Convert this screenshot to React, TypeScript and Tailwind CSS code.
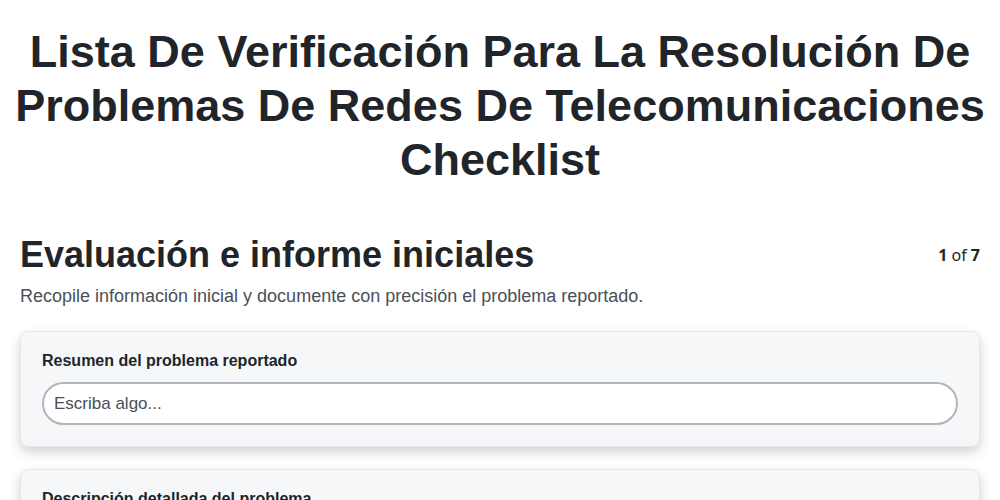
export default function App() {
  return (
    <main className="min-h-screen bg-white pt-[25px] text-[#212529] font-['Liberation_Sans',Arial,sans-serif]">
      <h1 className="px-[8px] text-center text-[45px] font-bold leading-[54px]">
        Lista De Verificación Para La Resolución De Problemas De Redes De Telecomunicaciones Checklist
      </h1>

      <section className="mt-[46px] px-5">
        <div className="flex items-center justify-between">
          <h2 className="text-[36px] font-bold leading-[43px]">Evaluación e informe iniciales</h2>
          <span className="font-['Noto_Sans',sans-serif] text-[16px] text-[#212529]">
            <b>1</b> of <b>7</b>
          </span>
        </div>
        <p className="mt-[7px] text-[18px] leading-[27px] text-[#495057]">
          Recopile información inicial y documente con precisión el problema reportado.
        </p>

        <div className="mt-[21px] flex flex-col gap-[22px]">
          <div className="rounded-lg border border-[#e5e7eb] bg-[#f6f7f9] px-[21px] pb-[21px] pt-[17px] shadow-[0_5px_12px_rgba(0,0,0,0.18)]">
            <label className="block text-[16px] font-bold leading-[24px]">Resumen del problema reportado</label>
            <input
              type="text"
              placeholder="Escriba algo..."
              className="mt-[9px] h-[43px] w-full rounded-full border-2 border-[#b1b6bc] bg-white px-[10px] text-[17px] placeholder:text-[#495057] outline-none"
            />
          </div>
          <div className="rounded-lg border border-[#e5e7eb] bg-[#f6f7f9] px-[21px] pb-[21px] pt-[17px] shadow-[0_5px_12px_rgba(0,0,0,0.18)]">
            <label className="block text-[16px] font-bold leading-[24px]">Descripción detallada del problema</label>
            <textarea
              placeholder="Escriba algo..."
              className="mt-[9px] h-[90px] w-full rounded-2xl border-2 border-[#b1b6bc] bg-white px-[10px] py-2 text-[17px] placeholder:text-[#495057] outline-none"
            />
          </div>
        </div>
      </section>
    </main>
  );
}
